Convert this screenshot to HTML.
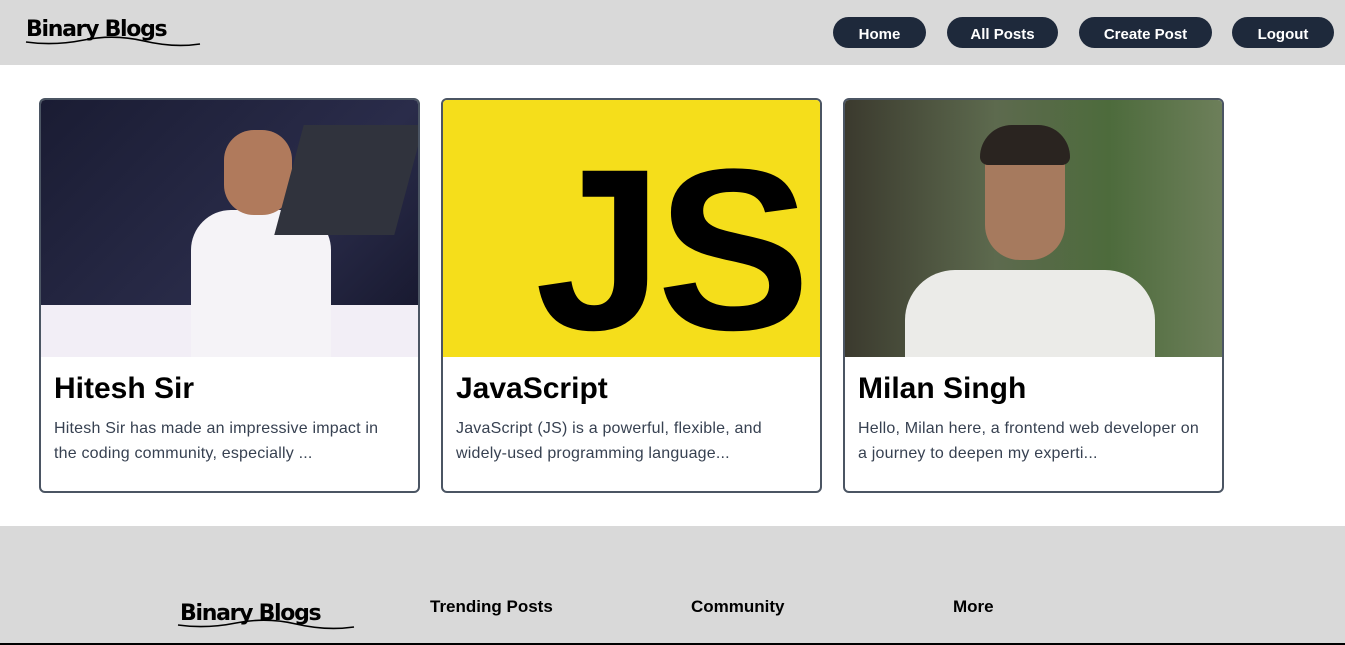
<!DOCTYPE html>
<html><head><style>
*{margin:0;padding:0;box-sizing:border-box}
body{width:1345px;height:645px;overflow:hidden;background:#fff;font-family:"Liberation Sans","DejaVu Sans",sans-serif;position:relative}
.hdr{position:absolute;left:0;top:0;width:1345px;height:65px;background:#d9d9d9}
.logo{position:absolute;font-family:"DejaVu Sans",sans-serif;font-weight:bold;font-size:22px;letter-spacing:-1.3px;color:#000}
.btn{position:absolute;top:17px;height:31px;background:#1e293b;color:#fff;border-radius:16px;font-weight:bold;font-size:15px;text-align:center;line-height:35px}
.card{position:absolute;top:98px;width:381px;height:395px;border:2px solid #4b5563;border-radius:6px;overflow:hidden;background:#fff}
.img{height:257px;position:relative;overflow:hidden}
.t{position:absolute;left:13px;top:272px;font-size:30px;font-weight:bold;color:#000}
.d{position:absolute;left:13px;top:316px;width:345px;font-size:16px;letter-spacing:0.2px;line-height:25px;color:#374151}
.ft{position:absolute;left:0;top:526px;width:1345px;height:118px;background:#d9d9d9}
.fh{position:absolute;top:597px;font-weight:bold;font-size:17px;color:#000}
</style></head><body>
<div class="hdr">
<div class="logo" style="left:26px;top:17px">Binary Blogs</div>
<svg style="position:absolute;left:24px;top:36px" width="178" height="12"><path d="M2 6 Q30 10 60 4 T120 5 T176 8" stroke="#000" stroke-width="1.6" fill="none"/></svg>
<div class="btn" style="left:833px;width:93px">Home</div>
<div class="btn" style="left:947px;width:111px">All Posts</div>
<div class="btn" style="left:1079px;width:133px">Create Post</div>
<div class="btn" style="left:1232px;width:102px">Logout</div>
</div>

<div class="card" style="left:39px">
<div class="img" style="background:linear-gradient(135deg,#1a1c33,#2a2c4a 60%,#14152a)">
<div style="position:absolute;left:0;top:205px;width:381px;height:60px;background:#f2eef6"></div>
<div style="position:absolute;left:150px;top:110px;width:140px;height:150px;background:#f5f3f7;border-radius:40px 40px 0 0"></div>
<div style="position:absolute;left:183px;top:30px;width:68px;height:85px;background:#b07a5c;border-radius:30px"></div>
<div style="position:absolute;left:248px;top:25px;width:120px;height:110px;background:#30333d;transform:skew(-15deg)"></div>
</div>
<div class="t">Hitesh Sir</div>
<div class="d">Hitesh Sir has made an impressive impact in the coding community, especially ...</div>
</div>

<div class="card" style="left:441px">
<div class="img" style="background:#f5de1b">
<div style="position:absolute;left:92px;top:20px;font-size:230px;font-weight:bold;color:#000;letter-spacing:-6px;line-height:260px">JS</div>
</div>
<div class="t">JavaScript</div>
<div class="d">JavaScript (JS) is a powerful, flexible, and widely-used programming language...</div>
</div>

<div class="card" style="left:843px">
<div class="img" style="background:linear-gradient(90deg,#3b3a2e,#5d6a4e 40%,#4d6b3c 70%,#6d7f5a)">
<div style="position:absolute;left:60px;top:170px;width:250px;height:100px;background:#ebebe8;border-radius:50px 50px 0 0"></div>
<div style="position:absolute;left:140px;top:30px;width:80px;height:130px;background:#a67a5e;border-radius:35px"></div>
<div style="position:absolute;left:135px;top:25px;width:90px;height:40px;background:#2a2420;border-radius:40px 40px 10px 10px"></div>
</div>
<div class="t">Milan Singh</div>
<div class="d">Hello, Milan here, a frontend web developer on a journey to deepen my experti...</div>
</div>

<div class="ft"></div>
<div class="logo" style="left:180px;top:601px">Binary Blogs</div>
<svg style="position:absolute;left:176px;top:619px" width="180" height="12"><path d="M2 6 Q30 10 60 4 T120 5 T178 8" stroke="#000" stroke-width="1.6" fill="none"/></svg>
<div class="fh" style="left:430px">Trending Posts</div>
<div class="fh" style="left:691px">Community</div>
<div class="fh" style="left:953px">More</div>
<div style="position:absolute;left:0;top:643px;width:1345px;height:2px;background:#000"></div>
</body></html>
